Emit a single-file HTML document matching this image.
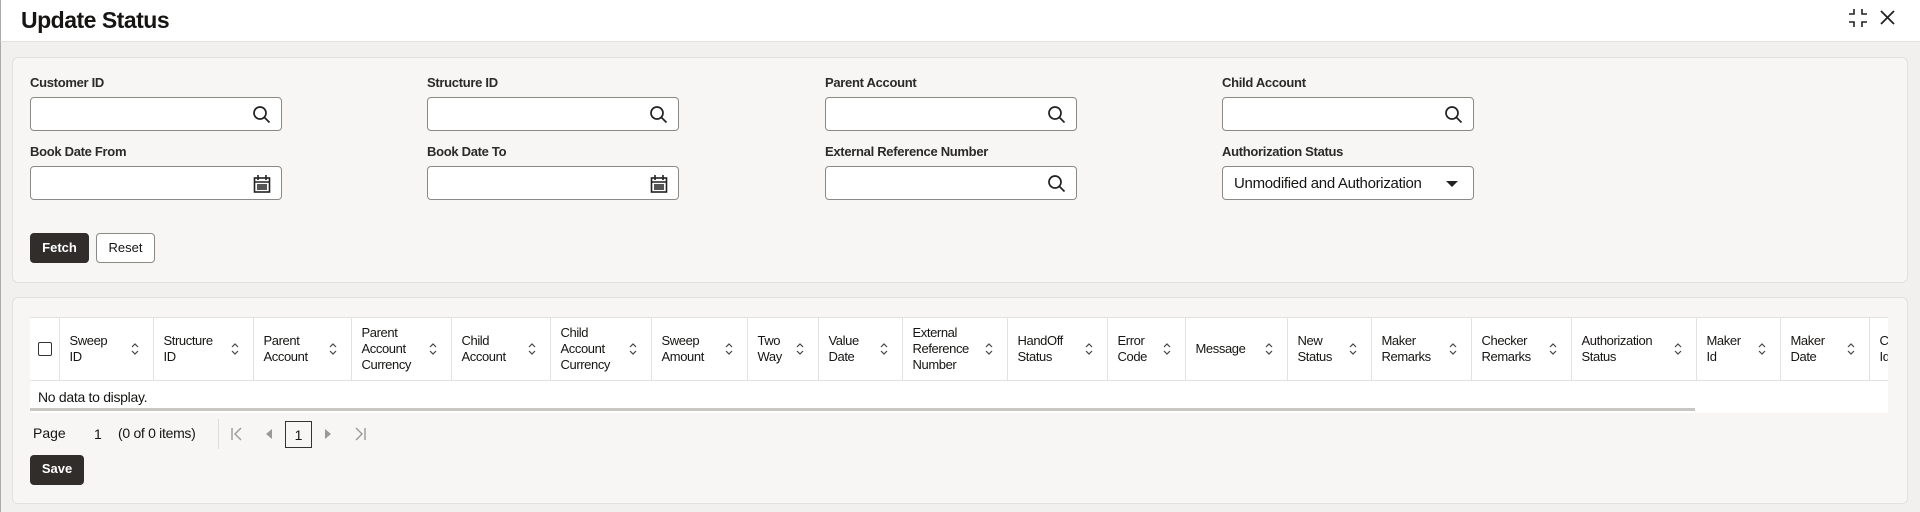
<!DOCTYPE html>
<html><head><meta charset="utf-8"><style>
*{box-sizing:border-box;margin:0;padding:0}
body{width:1920px;height:512px;overflow:hidden;background:#f1f0ee;font-family:"Liberation Sans Narrow","Liberation Sans",sans-serif;color:#161513;position:relative}
.hdr{position:absolute;left:0;top:0;width:1920px;height:42px;background:#fff;border-bottom:1px solid #e4e2df;border-left:1px solid #aaa}
.hdr h1{position:absolute;left:20px;top:7px;font-size:23px;font-weight:bold;letter-spacing:-0.5px}
.bgl{position:absolute;left:0;top:42px;width:1px;height:470px;background:#aaa}
.panel{position:absolute;left:12px;width:1896px;background:#f7f6f4;border:1px solid #e3e1de;border-radius:6px}
.lbl{position:absolute;font-size:13px;font-weight:bold;color:#2b2a28;letter-spacing:-0.3px}
.inp{position:absolute;width:252px;height:34px;background:#fff;border:1px solid #8b8985;border-radius:4px}
.inp svg{position:absolute;right:9px;top:7px}
.btn{position:absolute;height:30px;border-radius:4px;font-size:13px;font-weight:bold;text-align:center;line-height:28px}
table{border-collapse:collapse;position:absolute;left:0;top:0;table-layout:fixed;width:1919px}
th{height:62px;border-right:1px solid #e4e2df;border-bottom:1px solid #e4e2df;font-size:13px;font-weight:normal;text-align:left;padding:0 8px 0 10px;line-height:16px;position:relative;background:#fff;vertical-align:middle;letter-spacing:-0.4px;white-space:nowrap}
th svg{position:absolute;right:14px;top:25px}
</style></head><body>
<div class="hdr"><h1>Update Status</h1>
<svg style="position:absolute;left:1847px;top:8px" width="20" height="20" viewBox="0 0 20 20" fill="none" stroke="#222" stroke-width="1.6"><path d="M6 1v5H1M14 1v5h5M6 19v-5H1M14 19v-5h5"/></svg>
<svg style="position:absolute;left:1879px;top:10px" width="15" height="15" viewBox="0 0 15 15" stroke="#222" stroke-width="1.8"><path d="M1 1l13 13M14 1L1 14"/></svg>
</div>
<div class="bgl"></div>
<div class="panel" style="top:57px;height:226px"></div>
<div class="panel" style="top:297px;height:207px"></div>

<div class="lbl" style="left:30px;top:75px">Customer ID</div>
<div class="lbl" style="left:427px;top:75px">Structure ID</div>
<div class="lbl" style="left:825px;top:75px">Parent Account</div>
<div class="lbl" style="left:1222px;top:75px">Child Account</div>
<div class="lbl" style="left:30px;top:144px">Book Date From</div>
<div class="lbl" style="left:427px;top:144px">Book Date To</div>
<div class="lbl" style="left:825px;top:144px">External Reference Number</div>
<div class="lbl" style="left:1222px;top:144px">Authorization Status</div>

<div class="inp" style="left:30px;top:97px"><svg width="20" height="20" viewBox="0 0 20 20" fill="none" stroke="#222" stroke-width="1.7"><circle cx="8" cy="8" r="6"/><path d="M12.5 12.5l5 5"/></svg></div>
<div class="inp" style="left:427px;top:97px"><svg width="20" height="20" viewBox="0 0 20 20" fill="none" stroke="#222" stroke-width="1.7"><circle cx="8" cy="8" r="6"/><path d="M12.5 12.5l5 5"/></svg></div>
<div class="inp" style="left:825px;top:97px"><svg width="20" height="20" viewBox="0 0 20 20" fill="none" stroke="#222" stroke-width="1.7"><circle cx="8" cy="8" r="6"/><path d="M12.5 12.5l5 5"/></svg></div>
<div class="inp" style="left:1222px;top:97px"><svg width="20" height="20" viewBox="0 0 20 20" fill="none" stroke="#222" stroke-width="1.7"><circle cx="8" cy="8" r="6"/><path d="M12.5 12.5l5 5"/></svg></div>
<div class="inp" style="left:30px;top:166px"><svg width="20" height="20" viewBox="0 0 20 20" fill="none" stroke="#222" stroke-width="1.6"><rect x="2.5" y="4" width="15" height="14" fill="#fff"/><path d="M6 1v5M14 1v5M2 8h16"/><rect x="5" y="10" width="10" height="6" fill="#555" stroke="none"/></svg></div>
<div class="inp" style="left:427px;top:166px"><svg width="20" height="20" viewBox="0 0 20 20" fill="none" stroke="#222" stroke-width="1.6"><rect x="2.5" y="4" width="15" height="14" fill="#fff"/><path d="M6 1v5M14 1v5M2 8h16"/><rect x="5" y="10" width="10" height="6" fill="#555" stroke="none"/></svg></div>
<div class="inp" style="left:825px;top:166px"><svg width="20" height="20" viewBox="0 0 20 20" fill="none" stroke="#222" stroke-width="1.7"><circle cx="8" cy="8" r="6"/><path d="M12.5 12.5l5 5"/></svg></div>
<div class="inp" style="left:1222px;top:166px"><span style="position:absolute;left:11px;top:8px;font-size:15px;letter-spacing:-0.3px">Unmodified and Authorization</span><svg width="14" height="20" viewBox="0 0 14 20" style="right:14px;top:7px"><path d="M1 7h12l-6 6z" fill="#222"/></svg></div>

<div class="btn" style="left:30px;top:233px;width:59px;background:#312d2a;color:#fff;border:1px solid #312d2a">Fetch</div>
<div class="btn" style="left:96px;top:233px;width:59px;background:#fff;border:1px solid #8b8985;font-weight:normal">Reset</div>

<div style="position:absolute;left:30px;top:317px;width:1858px;height:96px;overflow:hidden;background:#fff;border-top:1px solid #e4e2df">
<table>
<colgroup><col style="width:29px"><col style="width:94px"><col style="width:100px"><col style="width:98px"><col style="width:100px"><col style="width:99px"><col style="width:101px"><col style="width:96px"><col style="width:71px"><col style="width:84px"><col style="width:105px"><col style="width:100px"><col style="width:78px"><col style="width:102px"><col style="width:84px"><col style="width:100px"><col style="width:100px"><col style="width:125px"><col style="width:84px"><col style="width:89px"><col style="width:80px"></colgroup>
<tr>
<th style="padding:0"><span style="position:absolute;left:8px;top:24px;width:14px;height:14px;border:1.5px solid #333;border-radius:2px"></span></th>
<th>Sweep<br>ID<svg width="8" height="12" viewBox="0 0 8 12" fill="none" stroke="#444" stroke-width="1.2"><path d="M1 4l3-3 3 3M1 8l3 3 3-3"/></svg></th>
<th>Structure<br>ID<svg width="8" height="12" viewBox="0 0 8 12" fill="none" stroke="#444" stroke-width="1.2"><path d="M1 4l3-3 3 3M1 8l3 3 3-3"/></svg></th>
<th>Parent<br>Account<svg width="8" height="12" viewBox="0 0 8 12" fill="none" stroke="#444" stroke-width="1.2"><path d="M1 4l3-3 3 3M1 8l3 3 3-3"/></svg></th>
<th>Parent<br>Account<br>Currency<svg width="8" height="12" viewBox="0 0 8 12" fill="none" stroke="#444" stroke-width="1.2"><path d="M1 4l3-3 3 3M1 8l3 3 3-3"/></svg></th>
<th>Child<br>Account<svg width="8" height="12" viewBox="0 0 8 12" fill="none" stroke="#444" stroke-width="1.2"><path d="M1 4l3-3 3 3M1 8l3 3 3-3"/></svg></th>
<th>Child<br>Account<br>Currency<svg width="8" height="12" viewBox="0 0 8 12" fill="none" stroke="#444" stroke-width="1.2"><path d="M1 4l3-3 3 3M1 8l3 3 3-3"/></svg></th>
<th>Sweep<br>Amount<svg width="8" height="12" viewBox="0 0 8 12" fill="none" stroke="#444" stroke-width="1.2"><path d="M1 4l3-3 3 3M1 8l3 3 3-3"/></svg></th>
<th>Two<br>Way<svg width="8" height="12" viewBox="0 0 8 12" fill="none" stroke="#444" stroke-width="1.2"><path d="M1 4l3-3 3 3M1 8l3 3 3-3"/></svg></th>
<th>Value<br>Date<svg width="8" height="12" viewBox="0 0 8 12" fill="none" stroke="#444" stroke-width="1.2"><path d="M1 4l3-3 3 3M1 8l3 3 3-3"/></svg></th>
<th>External<br>Reference<br>Number<svg width="8" height="12" viewBox="0 0 8 12" fill="none" stroke="#444" stroke-width="1.2"><path d="M1 4l3-3 3 3M1 8l3 3 3-3"/></svg></th>
<th>HandOff<br>Status<svg width="8" height="12" viewBox="0 0 8 12" fill="none" stroke="#444" stroke-width="1.2"><path d="M1 4l3-3 3 3M1 8l3 3 3-3"/></svg></th>
<th>Error<br>Code<svg width="8" height="12" viewBox="0 0 8 12" fill="none" stroke="#444" stroke-width="1.2"><path d="M1 4l3-3 3 3M1 8l3 3 3-3"/></svg></th>
<th>Message<svg width="8" height="12" viewBox="0 0 8 12" fill="none" stroke="#444" stroke-width="1.2"><path d="M1 4l3-3 3 3M1 8l3 3 3-3"/></svg></th>
<th>New<br>Status<svg width="8" height="12" viewBox="0 0 8 12" fill="none" stroke="#444" stroke-width="1.2"><path d="M1 4l3-3 3 3M1 8l3 3 3-3"/></svg></th>
<th>Maker<br>Remarks<svg width="8" height="12" viewBox="0 0 8 12" fill="none" stroke="#444" stroke-width="1.2"><path d="M1 4l3-3 3 3M1 8l3 3 3-3"/></svg></th>
<th>Checker<br>Remarks<svg width="8" height="12" viewBox="0 0 8 12" fill="none" stroke="#444" stroke-width="1.2"><path d="M1 4l3-3 3 3M1 8l3 3 3-3"/></svg></th>
<th>Authorization<br>Status<svg width="8" height="12" viewBox="0 0 8 12" fill="none" stroke="#444" stroke-width="1.2"><path d="M1 4l3-3 3 3M1 8l3 3 3-3"/></svg></th>
<th>Maker<br>Id<svg width="8" height="12" viewBox="0 0 8 12" fill="none" stroke="#444" stroke-width="1.2"><path d="M1 4l3-3 3 3M1 8l3 3 3-3"/></svg></th>
<th>Maker<br>Date<svg width="8" height="12" viewBox="0 0 8 12" fill="none" stroke="#444" stroke-width="1.2"><path d="M1 4l3-3 3 3M1 8l3 3 3-3"/></svg></th>
<th>Checker<br>Id</th>
</tr></table>
<div style="position:absolute;left:8px;top:71px;font-size:14px;letter-spacing:-0.3px">No data to display.</div>
<div style="position:absolute;left:0;top:90px;width:1665px;height:3px;background:#c9c7c4"></div>
</div>

<div style="position:absolute;left:33px;top:425px;font-size:14px">Page</div>
<div style="position:absolute;left:94px;top:426px;font-size:14px">1</div>
<div style="position:absolute;left:118px;top:425px;font-size:14px;letter-spacing:-0.3px">(0 of 0 items)</div>
<div style="position:absolute;left:218px;top:419px;width:1px;height:30px;background:#ddd"></div>
<svg style="position:absolute;left:230px;top:427px" width="14" height="14" viewBox="0 0 14 14" fill="none" stroke="#999" stroke-width="1.4"><path d="M2 1v12M11 1L5 7l6 6"/></svg>
<svg style="position:absolute;left:265px;top:429px" width="8" height="10" viewBox="0 0 8 10"><path d="M7 0v10L1 5z" fill="#999"/></svg>
<div style="position:absolute;left:285px;top:421px;width:27px;height:27px;border:1px solid #333;font-size:14px;text-align:center;line-height:26px">1</div>
<svg style="position:absolute;left:324px;top:429px" width="8" height="10" viewBox="0 0 8 10"><path d="M1 0v10l6-5z" fill="#999"/></svg>
<svg style="position:absolute;left:353px;top:427px" width="14" height="14" viewBox="0 0 14 14" fill="none" stroke="#999" stroke-width="1.4"><path d="M12 1v12M3 1l6 6-6 6"/></svg>
<div class="btn" style="left:30px;top:455px;width:54px;background:#312d2a;color:#fff">Save</div>
</body></html>
